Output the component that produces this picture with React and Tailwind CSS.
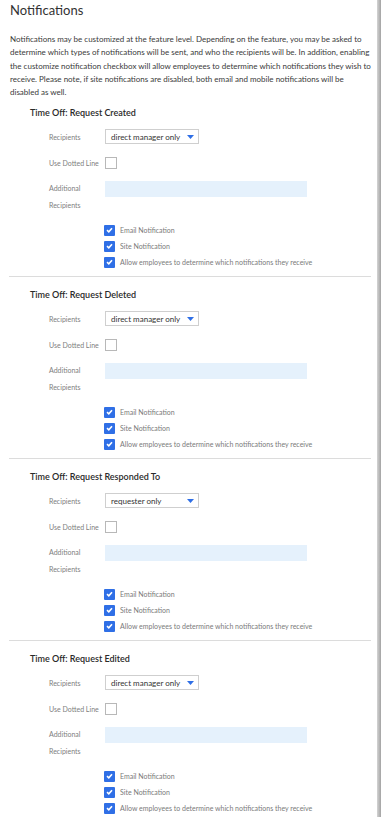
import { ChevronDown } from 'lucide-react'

const font = { fontFamily: 'Lato, "Liberation Sans", sans-serif' }

const sections = [
  { title: 'Time Off: Request Created', recipients: 'direct manager only' },
  { title: 'Time Off: Request Deleted', recipients: 'direct manager only' },
  { title: 'Time Off: Request Responded To', recipients: 'requester only' },
  { title: 'Time Off: Request Edited', recipients: 'direct manager only' },
]

function Check({ label }) {
  return (
    <div className="flex h-[16px] items-center">
      <span className="flex h-[11px] w-[11px] items-center justify-center rounded-[1px] bg-[#2f6fe6]">
        <svg width="7" height="6" viewBox="0 0 7 6" fill="none" stroke="white" strokeWidth="1.6">
          <path d="M1 3.2l1.8 1.6L6 1.2" />
        </svg>
      </span>
      <span className="ml-[5px] text-[7px] text-[#7a7a7a]">{label}</span>
    </div>
  )
}

function Section({ title, recipients, first }) {
  return (
    <section className={`border-b border-[#dcdcdc] pb-[6px] ${first ? 'pt-[6px]' : 'pt-[10px]'}`}>
      <h2 className="pl-[21px] text-[9px] font-semibold leading-[16px] text-[#2a2a2a]">{title}</h2>

      <div className="mt-[8px] flex h-[15px] items-center pl-[40px]">
        <span className="w-[56px] text-[7px] text-[#808080]">Recipients</span>
        <div className="flex h-[15px] w-[94px] items-center justify-between border border-[#cfcfcf] pl-[5px] pr-[4px]">
          <span className="text-[8px] text-[#333]">{recipients}</span>
          <svg width="7" height="4" viewBox="0 0 7 4"><path d="M0 0h7L3.5 4z" fill="#2f6fe6" /></svg>
        </div>
      </div>

      <div className="mt-[13px] flex h-[12px] items-center pl-[40px]">
        <span className="w-[56px] text-[7px] text-[#808080]">Use Dotted Line</span>
        <span className="h-[12px] w-[12px] border border-[#b8b8b8] bg-white" />
      </div>

      <div className="mt-[11px] flex items-start pl-[40px]">
        <span className="w-[56px] text-[7px] leading-[17px] text-[#808080]">
          Additional
          <br />
          Recipients
        </span>
        <div className="mt-[1px] h-[16px] w-[202px] bg-[#e5f1fc]" />
      </div>

      <div className="mt-[8px] pl-[95px]">
        <Check label="Email Notification" />
        <Check label="Site Notification" />
        <Check label="Allow employees to determine which notifications they receive" />
      </div>
    </section>
  )
}

export default function App() {
  return (
    <div className="flex min-h-screen bg-white" style={font}>
      <main className="flex-1 pl-[9px] pr-[6px]">
        <h1 className="pl-[1px] pt-[2px] text-[13px] leading-[17px] text-[#333]">Notifications</h1>
        <p className="mt-[14px] pl-[1px] text-[8px] leading-[13.3px] text-[#3a3a3a]">
          Notifications may be customized at the feature level. Depending on the feature, you may be asked to
          determine which types of notifications will be sent, and who the recipients will be. In addition, enabling
          the customize notification checkbox will allow employees to determine which notifications they wish to
          receive. Please note, if site notifications are disabled, both email and mobile notifications will be
          disabled as well.
        </p>
        {sections.map((s, i) => (
          <Section key={s.title} {...s} first={i === 0} />
        ))}
      </main>
      <div className="w-[4px] bg-gradient-to-r from-[#d4d4d4] to-[#a3a3a3]" />
    </div>
  )
}
